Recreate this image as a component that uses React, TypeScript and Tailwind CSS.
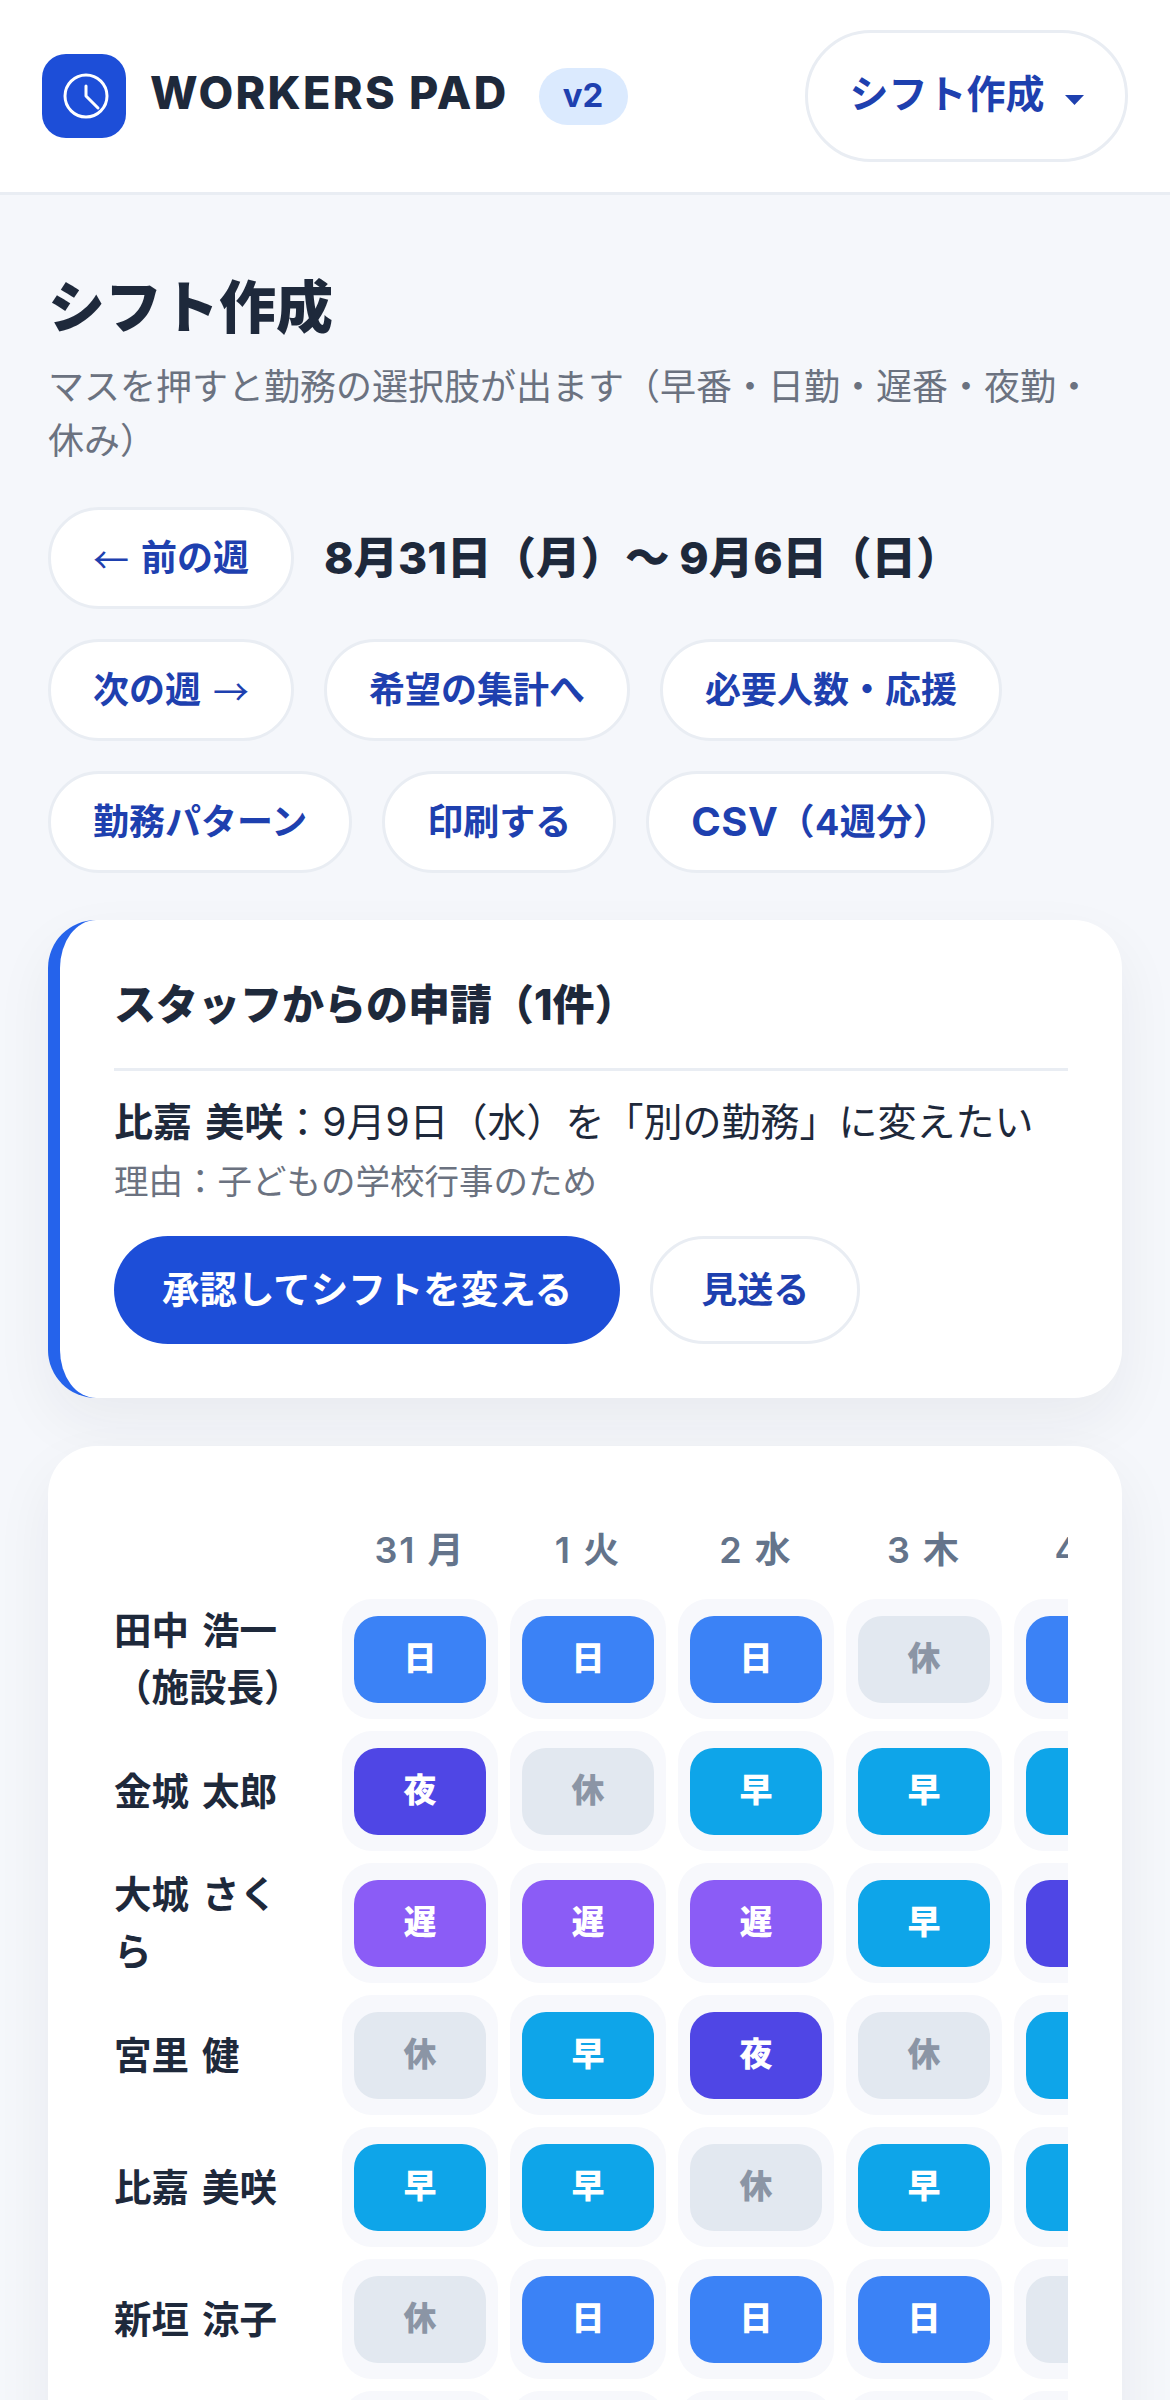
type Shift = "日" | "早" | "遅" | "夜" | "休";

const SHIFT_STYLES: Record<Shift, string> = {
  日: "bg-[#3b82f6] text-white",
  早: "bg-[#0ea5e9] text-white",
  遅: "bg-[#8b5cf6] text-white",
  夜: "bg-[#4f46e5] text-white",
  休: "bg-[#e2e8f0] text-[#8b95a5]",
};

const DAYS = ["31 月", "1 火", "2 水", "3 木", "4 金", "5 土", "6 日"];

const ROWS: { name: string; shifts: Shift[] }[] = [
  { name: "田中 浩一（施設長）", shifts: ["日", "日", "日", "休", "日", "日", "休"] },
  { name: "金城 太郎", shifts: ["夜", "休", "早", "早", "早", "休", "日"] },
  { name: "大城 さくら", shifts: ["遅", "遅", "遅", "早", "夜", "休", "休"] },
  { name: "宮里 健", shifts: ["休", "早", "夜", "休", "早", "早", "日"] },
  { name: "比嘉 美咲", shifts: ["早", "早", "休", "早", "早", "日", "休"] },
  { name: "新垣 涼子", shifts: ["休", "日", "日", "日", "休", "遅", "遅"] },
  { name: "島袋 健太", shifts: ["日", "休", "早", "遅", "遅", "休", "夜"] },
];

const pill =
  "flex h-[102px] items-center rounded-full border-[3px] border-[#e9edf3] bg-white px-[42px] text-[36px] font-bold text-[#1e40af]";

const arrow = "font-['Noto_Sans_CJK_JP'] font-normal";

export default function App() {
  return (
    <div className="h-[2400px] overflow-hidden bg-[#f5f7fb] font-['Inter','Noto_Sans_CJK_JP',sans-serif] text-[#1e293b]">
      <header className="flex h-[195px] items-center justify-between border-b-[3px] border-[#e9edf3] bg-white pl-[42px] pr-[42px]">
        <div className="flex items-center">
          <div className="flex h-[84px] w-[84px] items-center justify-center rounded-[24px] bg-[#1d4ed8] text-white">
            <svg width="54" height="54" viewBox="0 0 54 54" fill="none" stroke="currentColor" strokeWidth="3" strokeLinecap="round" strokeLinejoin="round" className="ml-[3px]">
              <circle cx="27" cy="27" r="21" />
              <path d="M27 17v10l12 12" />
            </svg>
          </div>
          <span className="mb-[6px] ml-[24px] text-[45px] font-extrabold tracking-[2.300px]">WORKERS PAD</span>
          <span className="ml-[30px] flex h-[57px] w-[89px] items-center justify-center rounded-full bg-[#dbeafe] text-[33px] font-bold text-[#1e40af]">
            v2
          </span>
        </div>
        <button className="flex h-[132px] w-[323px] items-center justify-center gap-[20px] rounded-full border-[3px] border-[#e9edf3] bg-white text-[39px] font-bold text-[#1e40af]">
          <span className="mb-[4px]">シフト作成</span>
          <svg width="19" height="10" viewBox="0 0 19 10" className="mt-[8px]">
            <path d="M0 0h19L9.500 10z" fill="currentColor" />
          </svg>
        </button>
      </header>

      <main className="px-[48px] pt-[77px]">
        <h1 className="text-[57px] font-black leading-[72px]">シフト作成</h1>
        <p className="mt-[16px] text-[36px] leading-[54px] text-[#6b7280]">
          マスを押すと勤務の選択肢が出ます（早番・日勤・遅番・夜勤・休み）
        </p>

        <div className="mt-[39px] flex flex-wrap items-center gap-[30px]">
          <button className={pill}>
            <span className={arrow}>←</span>
            <span className="ml-[12px]">前の週</span>
          </button>
          <span className="text-[44.500px] font-extrabold">8月31日（月）〜 9月6日（日）</span>
          <button className={pill}>
            <span className="mr-[12px]">次の週</span>
            <span className={arrow}>→</span>
          </button>
          <button className={pill}>希望の集計へ</button>
          <button className={pill}>必要人数・応援</button>
          <button className={pill}>勤務パターン</button>
          <button className={pill}>印刷する</button>
          <button className={`${pill} tracking-[0.5px]`}>
            <span className="text-[40px]">CSV</span>（4週分）
          </button>
        </div>

        <section className="mt-[47px] rounded-[48px] border-l-[12px] border-[#2563eb] bg-white px-[54px] py-[54px] shadow-[0_24px_60px_rgba(30,41,59,0.06)]">
          <h2 className="text-[42px] font-extrabold leading-[62px]">スタッフからの申請（1件）</h2>
          <div className="mt-[32px] border-t-[3px] border-[#e9edf3] pt-[22px]">
            <p className="text-[39px] leading-[58px] [word-spacing:4px]">
              <strong className="font-bold">比嘉 美咲</strong>：9月9日（水）を「別の勤務」に変えたい
            </p>
            <p className="mt-[6px] text-[34.500px] leading-[50px] text-[#6b7280]">理由：子どもの学校行事のため</p>
          </div>
          <div className="mt-[29px] flex gap-[30px]">
            <button className="flex h-[108px] items-center rounded-full bg-[#1d4ed8] px-[48px] text-[37.500px] font-bold text-white">
              承認してシフトを変える
            </button>
            <button className="flex h-[108px] items-center rounded-full border-[3px] border-[#e9edf3] bg-white px-[48px] text-[36px] font-bold text-[#1e40af]">
              見送る
            </button>
          </div>
        </section>

        <section className="mt-[48px] rounded-[48px] bg-white pb-[66px] pl-[66px] pr-[54px] pt-[66px] shadow-[0_24px_60px_rgba(30,41,59,0.06)]">
          <div className="overflow-hidden">
            <div className="grid w-max grid-cols-[216px_repeat(7,156px)] items-center gap-[12px]">
              <div className="h-[75px]" />
              {DAYS.map((day) => (
                <div key={day} className="text-center text-[36px] font-semibold tracking-[2px] text-[#64748b]">
                  {day}
                </div>
              ))}
              {ROWS.map((row) => (
                <div key={row.name} className="contents">
                  <div className="pr-[36px] text-[37.500px] font-bold leading-[57px] [word-spacing:4px]">{row.name}</div>
                  {row.shifts.map((shift, i) => (
                    <div key={i} className="rounded-[30px] bg-[#f7f8fc] px-[12px] py-[16.500px]">
                      <div
                        className={`flex h-[87px] items-center justify-center rounded-[24px] text-[33px] font-extrabold ${SHIFT_STYLES[shift]}`}
                      >
                        {shift}
                      </div>
                    </div>
                  ))}
                </div>
              ))}
            </div>
          </div>
        </section>
      </main>
    </div>
  );
}
